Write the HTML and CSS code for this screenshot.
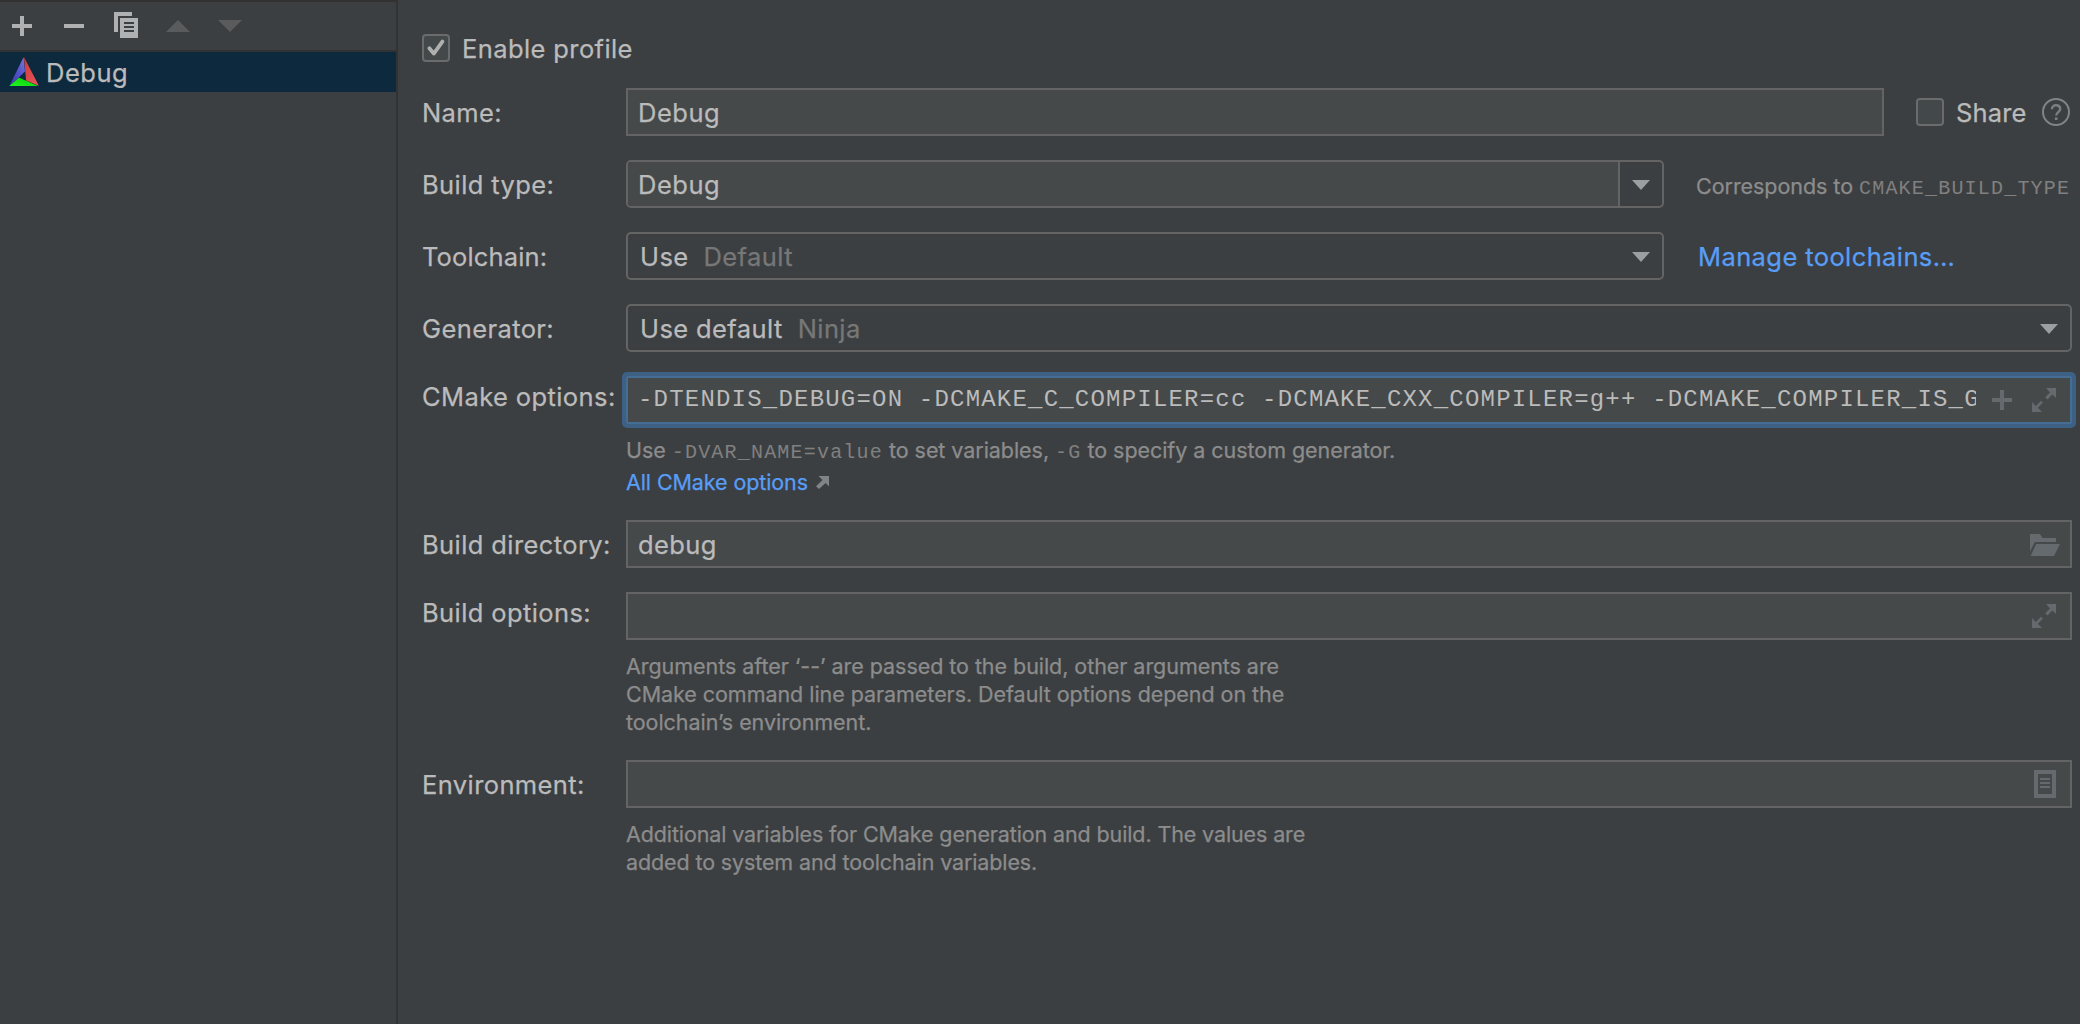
FILE: index.html
```
<!DOCTYPE html>
<html lang="en">
<head>
<meta charset="utf-8">
<title>CMake profiles</title>
<link rel="stylesheet" href="styles.css">
</head>
<body>
<div class="app">
  <aside class="sidebar">
    <div class="toolbar">
      <svg class="tool" width="24" height="28" viewBox="0 0 24 28"><path d="M10 4h4v8h8v4h-8v8h-4v-8H2v-4h8z"/></svg>
      <svg class="tool" width="24" height="28" viewBox="0 0 24 28"><path d="M2 12h20v4H2z"/></svg>
      <svg class="tool" width="24" height="28" viewBox="0 0 24 28"><path d="M0 0h18v4H4v16H0z"/><path fill-rule="evenodd" d="M6 6h18v20H6zM10 10v2h10v-2zM10 14v2h10v-2zM10 18v2h10v-2z"/></svg>
      <svg class="tool off" width="24" height="28" viewBox="0 0 24 28"><path d="M12 8l12 12H0z"/></svg>
      <svg class="tool off" width="24" height="28" viewBox="0 0 24 28"><path d="M0 8h24L12 20z"/></svg>
    </div>
    <div class="profile selected">
      <svg width="30" height="30" viewBox="0 0 30 30">
        <defs>
          <linearGradient id="blue" x1="1" y1="0" x2="0" y2="1"><stop offset="0" stop-color="#7a78d8"/><stop offset=".5" stop-color="#5351c8"/><stop offset="1" stop-color="#3a39b4"/></linearGradient>
          <linearGradient id="red" x1="0" y1="0" x2="1" y2="1"><stop offset="0" stop-color="#c83a3c"/><stop offset="1" stop-color="#f0585a"/></linearGradient>
          <linearGradient id="green" x1="0" y1="1" x2="1" y2="0"><stop offset="0" stop-color="#20f520"/><stop offset="1" stop-color="#0cc80c"/></linearGradient>
        </defs>
        <path fill="url(#blue)" d="M14.600 0L16 15 .6 28.400z"/>
        <path fill="url(#red)" d="M15 0l14.800 28.800L17 23.500z"/>
        <path fill="url(#green)" d="M10 20.500L29 29H.3z"/>
        <path fill="#0d293e" d="M15.800 14.600l.9 8.600-6.500-2.800z"/>
      </svg>
      <span class="short">Debug</span>
    </div>
  </aside>

  <main class="form">
    <div class="check enable">
      <svg class="box" width="28" height="28" viewBox="0 0 28 28"><rect x="1" y="1" width="26" height="26" rx="3"/><path d="M7.400 14.200l4.400 5.400 8.600-12"/></svg>
      <span>Enable profile</span>
    </div>

    <div class="row">
      <div class="label">Name:</div>
      <div class="line">
        <div class="field name"><span class="short">Debug</span></div>
        <div class="check share">
          <svg class="box" width="28" height="28" viewBox="0 0 28 28"><rect x="1" y="1" width="26" height="26" rx="3"/></svg>
          <span class="tight">Share</span>
          <svg class="help" width="28" height="28" viewBox="0 0 28 28"><circle cx="14" cy="14" r="13"/><path d="M9.900 11.200c0-2.400 1.700-4 4.100-4s4.200 1.500 4.200 3.800c0 3-4 3.300-4 6.600"/><path class="dot" d="M12.900 19.400h2.600V22h-2.600z"/></svg>
        </div>
      </div>
    </div>

    <div class="row">
      <div class="label">Build type:</div>
      <div class="line">
        <div class="combo editable">
          <span class="value short">Debug</span>
          <span class="opener"><svg width="18" height="10" viewBox="0 0 18 10"><path d="M0 0h18L9 10z"/></svg></span>
        </div>
        <div class="note">Corresponds to <code>CMAKE_BUILD_TYPE</code></div>
      </div>
    </div>

    <div class="row">
      <div class="label tight">Toolchain:</div>
      <div class="line">
        <div class="combo">
          <span>Use</span><span class="dim">Default</span>
          <svg class="arrow" width="18" height="10" viewBox="0 0 18 10"><path d="M0 0h18L9 10z"/></svg>
        </div>
        <a class="link">Manage toolchains…</a>
      </div>
    </div>

    <div class="row">
      <div class="label">Generator:</div>
      <div class="combo wide">
        <span>Use default</span><span class="dim">Ninja</span>
        <svg class="arrow" width="18" height="10" viewBox="0 0 18 10"><path d="M0 0h18L9 10z"/></svg>
      </div>
    </div>

    <div class="row">
      <div class="label raised">CMake options:</div>
      <div>
        <div class="field focused">
          <span class="mono">-DTENDIS_DEBUG=ON -DCMAKE_C_COMPILER=cc -DCMAKE_CXX_COMPILER=g++ -DCMAKE_COMPILER_IS_G</span>
          <svg class="glyph plus" width="20" height="20" viewBox="0 0 20 20"><path d="M8 0h4v8h8v4h-8v8H8v-8H0V8h8z"/></svg>
          <svg class="glyph expand" width="24" height="24" viewBox="0 0 24 24"><path d="M14 0h10v10l-3.600-3.600-5 5L13.200 9.200l4.800-4.800zM0 14l3.900 3.900 5.100-5.100 1.900 1.900-5.100 5.100L10 24H0z"/></svg>
        </div>
        <div class="hint">Use <code>-DVAR_NAME=value</code> to set variables, <code>-G</code> to specify a custom generator.</div>
        <a class="link small">All CMake options<svg width="13" height="13" viewBox="0 0 13 13"><path d="M2.500 0H13v10.500L9.600 7.100 3 13 0 10.200l6.500-6.300z"/></svg></a>
      </div>
    </div>

    <div class="row">
      <div class="label">Build directory:</div>
      <div class="field">
        <span>debug</span>
        <svg class="glyph folder" width="30" height="22" viewBox="0 0 30 22"><path d="M0 0h10l2.500 4H26v4H4.800L0 17.500z"/><path d="M6.200 10H30l-6 12H.6z"/></svg>
      </div>
    </div>

    <div class="row">
      <div class="label raised">Build options:</div>
      <div>
        <div class="field">
          <svg class="glyph expand" width="24" height="24" viewBox="0 0 24 24"><path d="M14 0h10v10l-3.600-3.600-5 5L13.200 9.200l4.800-4.800zM0 14l3.900 3.900 5.100-5.100 1.900 1.900-5.100 5.100L10 24H0z"/></svg>
        </div>
        <div class="hint">Arguments after ‘--’ are passed to the build, other arguments are<br>CMake command line parameters. Default options depend on the<br>toolchain’s environment.</div>
      </div>
    </div>

    <div class="row">
      <div class="label">Environment:</div>
      <div>
        <div class="field">
          <svg class="glyph list" width="22" height="28" viewBox="0 0 22 28"><path fill-rule="evenodd" d="M0 0h22v28H0zM4 4v20h14V4z"/><path d="M6 8h10v2H6zM6 12h10v2H6zM6 16h10v2H6z"/></svg>
        </div>
        <div class="hint narrow">Additional variables for CMake generation and build. The values are<br>added to system and toolchain variables.</div>
      </div>
    </div>
  </main>
</div>
</body>
</html>
```
FILE: styles.css
```
* { box-sizing: border-box; }

body {
  margin: 0;
  background: #3c3f41;
  color: #bbbbbb;
  font-family: Inter, "Liberation Sans", sans-serif;
  font-size: 25.5px;
  letter-spacing: 0.4px;
  white-space: nowrap;
  -webkit-text-stroke: 0.25px;
}

svg { display: block; flex: none; }

.app {
  display: flex;
  width: 2080px;
  height: 1024px;
  overflow: hidden;
}

/* Profile list */
.sidebar {
  width: 398px;
  border-top: 2px solid #323232;
  border-right: 2px solid #323232;
}
.toolbar {
  display: flex;
  gap: 28px;
  height: 50px;
  padding: 10px;
  border-bottom: 2px solid #323232;
}
.tool { fill: #afb1b3; }
.tool.off { fill: #5a5b5c; }
.profile {
  display: flex;
  align-items: flex-start;
  gap: 7px;
  height: 40px;
  padding: 5px 9px;
}
.profile span { line-height: 32px; }
.selected { background: #0d293e; }

/* Form */
.form {
  display: flex;
  flex: 1;
  flex-direction: column;
  gap: 24px;
  padding: 34px 8px 0 24px;
}
.row {
  display: grid;
  grid-template-columns: 204px 1446px;
}
.label { height: 48px; line-height: 50px; }
.label.raised { line-height: 42px; }
.line { display: flex; height: 48px; }
.short { letter-spacing: 0.5px; }
.tight { letter-spacing: 0.15px; }

.check {
  display: flex;
  height: 28px;
  line-height: 30px;
}
.check span { margin-left: 12px; }
.enable { margin-bottom: 2px; }
.share {
  width: 154px;
  margin: 10px 0 0 32px;
}
.box rect { fill: #43494a; stroke: #6b6b6b; stroke-width: 2; }
.box path {
  fill: none;
  stroke: #afafaf;
  stroke-width: 3.8;
  stroke-linecap: round;
  stroke-linejoin: round;
}
.help {
  margin-left: auto;
  fill: none;
  stroke: #7f8486;
  stroke-width: 2;
}
.help path { stroke: #7a7e80; stroke-width: 2.4; }
.help .dot { fill: #7a7e80; stroke: none; }

.field,
.combo {
  display: flex;
  height: 48px;
  border: 2px solid #646464;
  line-height: 46px;
}
.field { padding-left: 10px; background: #45494a; }
.name { width: 1258px; }
.focused {
  border-color: #466d94;
  outline: 4px solid #3d6185;
  border-radius: 1px;
}
.mono {
  width: 1338px;
  overflow: hidden;
  font-family: "Liberation Mono", monospace;
  font-size: 24px;
  line-height: 44px;
  letter-spacing: 1.2px;
  -webkit-text-stroke: 0;
}

.combo {
  width: 1038px;
  padding-left: 12px;
  border-radius: 5px;
}
.combo.wide { width: auto; }
.combo svg { fill: #9b9fa2; }
.combo.editable { padding-left: 0; }
.value {
  flex: 1;
  height: 44px;
  padding-left: 10px;
  border-radius: 3px 0 0 3px;
  background: #45494a;
}
.opener { width: 44px; padding: 18px 12px; border-left: 2px solid #646464; }
.arrow { margin: 18px 12px 0 auto; }
.dim { margin-left: 15px; color: #777777; }

.glyph { margin-left: auto; fill: #646a6d; }
.plus { margin: 12px 0 0 16px; }
.expand { margin: 10px 14px 0 auto; }
.folder { margin: 12px 10px 0 auto; }
.list { margin: 8px 14px 0 auto; }

.note,
.hint,
.small { font-size: 21.5px; letter-spacing: -0.05px; }
.note { margin-left: 32px; line-height: 52px; color: #8c8c8c; }
.hint { margin-top: 12px; line-height: 28px; color: #8c8c8c; }
.hint.narrow { letter-spacing: -0.12px; }
code {
  font-family: "Liberation Mono", monospace;
  font-size: 20px;
  line-height: 1;
  letter-spacing: 1.2px;
  color: #808080;
  -webkit-text-stroke: 0;
}
.link { margin-left: 34px; line-height: 50px; color: #589df6; }
.link.small {
  display: flex;
  margin: 4px 0 0;
  line-height: 28px;
  letter-spacing: -0.1px;
}
.small svg { margin: 8px 0 0 8px; fill: #7f8486; }
```
